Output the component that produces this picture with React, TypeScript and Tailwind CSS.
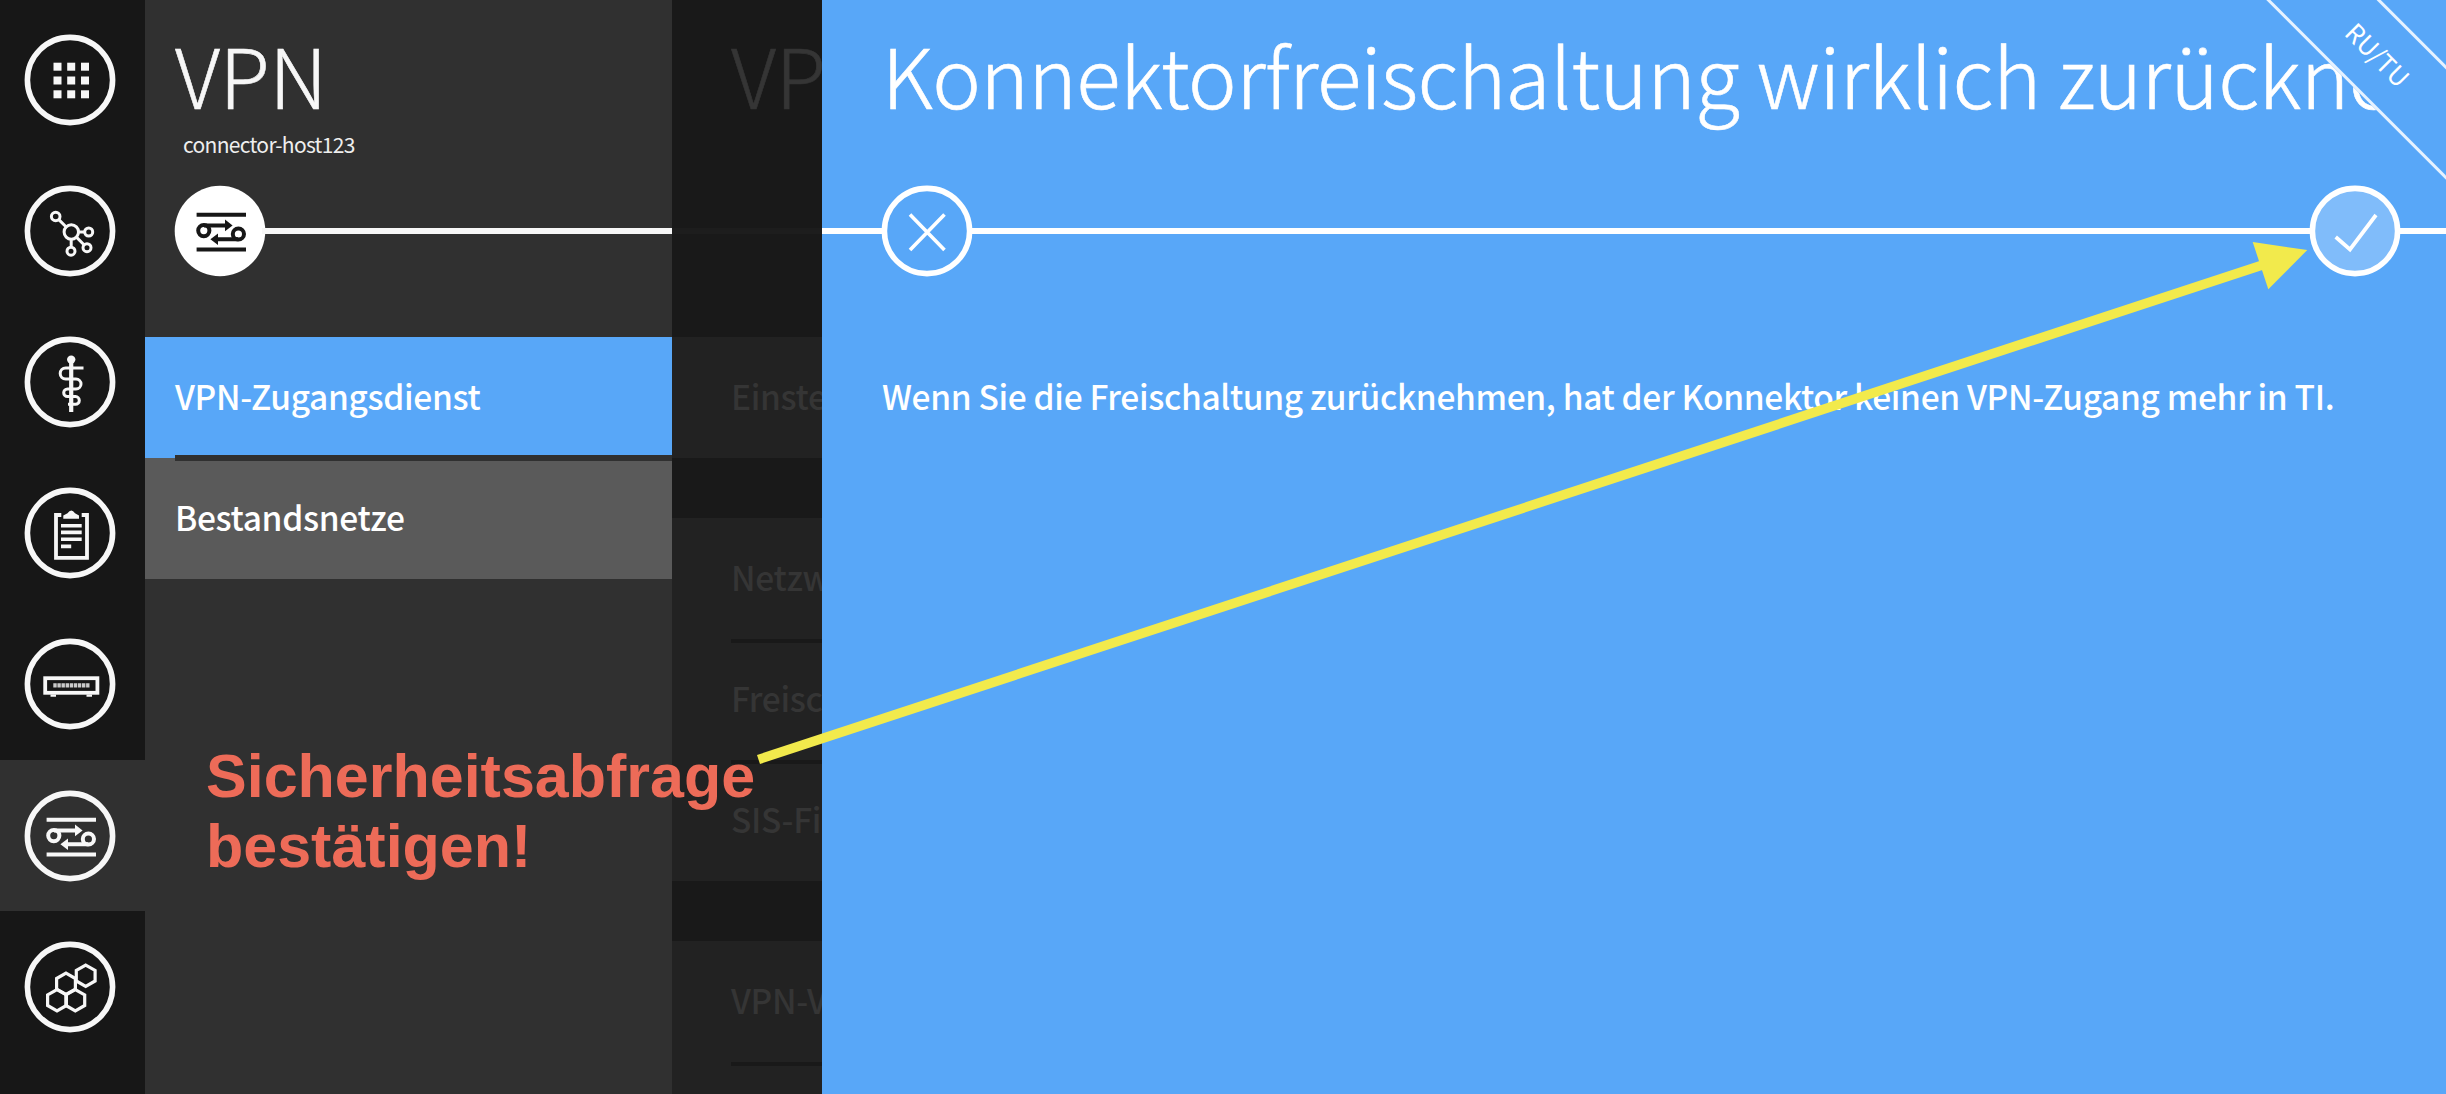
import type { ReactNode } from "react";

const SANS = "font-['Noto_Sans_CJK_SC','Noto_Sans',sans-serif]";

function Glyph({ children }: { children: ReactNode }) {
  return (
    <svg viewBox="0 0 92 92" className="block size-[92px] shrink-0" fill="none" stroke="currentColor">
      {children}
    </svg>
  );
}

function GridIcon() {
  return (
    <g fill="currentColor" stroke="none">
      {[28.7, 42.5, 56.3].map((y) =>
        [29.5, 43.2, 57].map((x) => <rect key={`${x}-${y}`} x={x} y={y} width="8" height="8" />),
      )}
    </g>
  );
}

function NetworkIcon() {
  return (
    <g strokeWidth="3">
      <circle cx="31.7" cy="31.5" r="4.3" />
      <circle cx="47.3" cy="47" r="7.2" />
      <circle cx="64.7" cy="47" r="4" />
      <circle cx="63" cy="62.7" r="4" />
      <circle cx="47" cy="66.2" r="4" />
      <path d="M34.8 34.6 42 41.8M54.5 47H60.6M52.4 52.1 60 59.8M47.2 54.2V62.2" />
    </g>
  );
}

function RodIcon() {
  return (
    <g strokeWidth="3">
      <path d="M47.2 23V76" strokeWidth="4.2" />
      <circle cx="47.2" cy="23.6" r="4.2" fill="currentColor" stroke="none" />
      <path d="M59.5 32H41.7a5.5 5.5 0 0 0 0 11H52a5 5 0 0 1 0 10H43.5a3.8 3.8 0 0 0 0 7.6H51.5a3.8 3.8 0 0 1 0 7.6H44" />
    </g>
  );
}

function ClipboardIcon() {
  return (
    <g>
      <path d="M37.3 28H32V70.8H63V28H57.7" strokeWidth="3.8" />
      <path d="M39.3 31.8V28.5L43.5 26.3Q47.3 20.5 51 26.3L55 28.5V31.8Z" fill="currentColor" stroke="none" />
      <path d="M37 38.7H57.7M37 45.4H57.7M37 52.2H57.7M37 59.4H47.2" strokeWidth="3.6" />
    </g>
  );
}

function RouterIcon() {
  return (
    <g>
      <rect x="21.2" y="40.2" width="52.2" height="14.6" strokeWidth="3.8" />
      <path d="M29.3 47.4H65.5" strokeWidth="4.2" strokeDasharray="3.4 0.7" opacity="0.8" />
      <path d="M26.5 57.6H32M62.5 57.6H68" strokeWidth="2.4" />
    </g>
  );
}

function TunnelIcon() {
  return (
    <g strokeWidth="4">
      <path d="M22.6 29.8H72M22.6 64.4H72" />
      <circle cx="29.8" cy="45.6" r="5.6" />
      <circle cx="64.4" cy="49" r="5.6" />
      <path d="M30 40.4H52M64.2 54.3H43" />
      <path d="M51 34.6 58.6 40.4 51 46.2ZM44 48.5 36.4 54.3 44 60.1Z" fill="currentColor" stroke="none" />
    </g>
  );
}

function HexagonsIcon() {
  const centers = [
    [61.7, 34.7],
    [42, 42.8],
    [33, 59.2],
    [51.3, 59.2],
  ];
  return (
    <g strokeWidth="3.2">
      {centers.map(([x, y]) => (
        <path key={`${x}-${y}`} transform={`translate(${x} ${y})`} d="M0-10.6 9.4-5.3V5.3L0 10.6-9.4 5.3V-5.3Z" />
      ))}
    </g>
  );
}

const Ring = ({ fill = "none" }: { fill?: string }) => <circle cx="46" cy="46" r="42.6" strokeWidth="5.6" fill={fill} />;

const navigation = [
  { name: "apps", icon: <GridIcon /> },
  { name: "network", icon: <NetworkIcon /> },
  { name: "health", icon: <RodIcon /> },
  { name: "protocol", icon: <ClipboardIcon /> },
  { name: "device", icon: <RouterIcon /> },
  { name: "vpn", icon: <TunnelIcon />, active: true },
  { name: "modules", icon: <HexagonsIcon /> },
];

const settingsGroups = [
  ["Einstellungen"],
  ["Netzwerk", "Freischaltung", "SIS-Filter"],
  ["VPN-Verbindung", "VPN-Status"],
];

function Sidebar() {
  return (
    <nav className="flex w-[145px] shrink-0 flex-col bg-[#171717] pt-1 text-[#f7f7f7]">
      {navigation.map((item) => (
        <div
          key={item.name}
          className={`flex h-[151.2px] shrink-0 items-center pl-6 ${item.active ? "bg-[#303030]" : ""}`}
        >
          <Glyph>
            <Ring />
            {item.icon}
          </Glyph>
        </div>
      ))}
    </nav>
  );
}

function MenuPanel() {
  return (
    <section className="flex w-[527px] shrink-0 flex-col bg-[#303030] text-white">
      <header className="h-[185px] pl-[30px] pt-[24px]">
        <h1 className="h-[105px] text-[82px] font-light leading-[100px] tracking-[-0.5px] text-[#f7f7f7] [-webkit-text-stroke:0.6px]">
          VPN
        </h1>
        <p className="pl-2 text-[21px] leading-[30px] tracking-[-0.7px] text-[#eeeeee]">connector-host123</p>
      </header>
      <div className="flex h-[152px] items-start pl-[29px]">
        <div className="text-[#171717]">
          <Glyph>
            <circle cx="46" cy="46" r="45.3" fill="white" stroke="none" />
            <TunnelIcon />
          </Glyph>
        </div>
        <div className="-ml-1 mt-[43px] h-1.5 grow bg-[#f7f7f7]" />
      </div>
      <div className="flex h-[121px] flex-col bg-[#58a7f8]">
        <span className="h-[118px] pl-[30px] text-[33.5px] font-medium leading-[118px] tracking-[-0.35px]">
          VPN-Zugangsdienst
        </span>
        <div className="relative z-10 ml-[30px] h-1.5 shrink-0 bg-[#303030]" />
      </div>
      <div className="h-[121px] bg-[#5a5a5a] pl-[30px] text-[33.5px] font-medium leading-[118px] tracking-[-0.35px]">
        Bestandsnetze
      </div>
    </section>
  );
}

function DimmedPanel() {
  return (
    <section className="flex w-[150px] shrink-0 flex-col overflow-hidden whitespace-nowrap bg-[#191919] text-[#353535]">
      <div className="h-[228px] shrink-0 pl-[59px] pt-[24px] text-[82px] font-light leading-[100px] tracking-[-0.5px] [-webkit-text-stroke:0.6px]">
        VPN
      </div>
      <div className="h-1.5 shrink-0 bg-[#1d1d1d]" />
      <div className="mt-[103px] flex shrink-0 flex-col gap-[60px]">
        {settingsGroups.map((group) => (
          <div key={group[0]} className="bg-[#222222]">
            {group.map((label, i) => (
              <div key={label} className="h-[121px]">
                <div className={`ml-[59px] h-1 ${i > 0 ? "bg-[#191919]" : ""}`} />
                <div className="pl-[59px] text-[33.5px] font-medium leading-[110px] tracking-[-0.35px]">{label}</div>
              </div>
            ))}
          </div>
        ))}
      </div>
    </section>
  );
}

function ConfirmPanel() {
  return (
    <main className="relative flex min-w-0 grow flex-col overflow-hidden whitespace-nowrap bg-[#58a7f8] text-white">
      <h2 className="h-[185px] pl-[60px] pt-[24px] text-[82px] font-light leading-[100px] tracking-[-0.55px] [-webkit-text-stroke:0.6px]">
        Konnektorfreischaltung wirklich zurücknehmen?
      </h2>
      <div className="flex h-[92px] shrink-0 items-center">
        <div className="h-1.5 w-[62px] bg-white" />
        <div className="-ml-[3px] -mr-0.5">
          <Glyph>
            <Ring />
            <path d="M29 29.5 63.5 65M63.5 29.5 29 65" strokeWidth="3.6" />
          </Glyph>
        </div>
        <div className="h-1.5 grow bg-white" />
        <div className="-mx-0.5">
          <Glyph>
            <Ring fill="#80bcfa" />
            <path d="M26.7 52 41 64.5 67 30" strokeWidth="3.8" />
          </Glyph>
        </div>
        <div className="h-1.5 w-[47px] bg-white" />
      </div>
      <p className="mt-[60px] pl-[60px] text-[33.5px] font-medium leading-[118px] tracking-[-0.35px]">
        Wenn Sie die Freischaltung zurücknehmen, hat der Konnektor keinen VPN-Zugang mehr in TI.
      </p>
      <div className="absolute right-[-127px] top-[14px] flex h-[81px] w-[390px] rotate-45 items-center justify-center border-y-[3px] border-[#e6f2ff] bg-[#58a7f8] text-[25.5px]">
        RU/TU
      </div>
    </main>
  );
}

export default function App() {
  return (
    <div className={`relative flex h-[1094px] w-[2446px] overflow-hidden ${SANS}`}>
      <Sidebar />
      <MenuPanel />
      <DimmedPanel />
      <ConfirmPanel />
      <p className="absolute left-[206px] top-[741px] z-20 font-['Liberation_Sans',sans-serif] text-[61px] font-bold leading-[70px] text-[#ed6b58]">
        Sicherheitsabfrage
        <br />
        bestätigen!
      </p>
      <svg viewBox="0 0 2446 1094" className="absolute inset-0 z-20 h-[1094px] w-[2446px]">
        <path d="M758.5 759.5 2264 264.5" stroke="#f2ea4c" strokeWidth="9.5" />
        <path d="M2307.3 250 2252.7 242 2268.3 289.3Z" fill="#f2ea4c" />
      </svg>
    </div>
  );
}
